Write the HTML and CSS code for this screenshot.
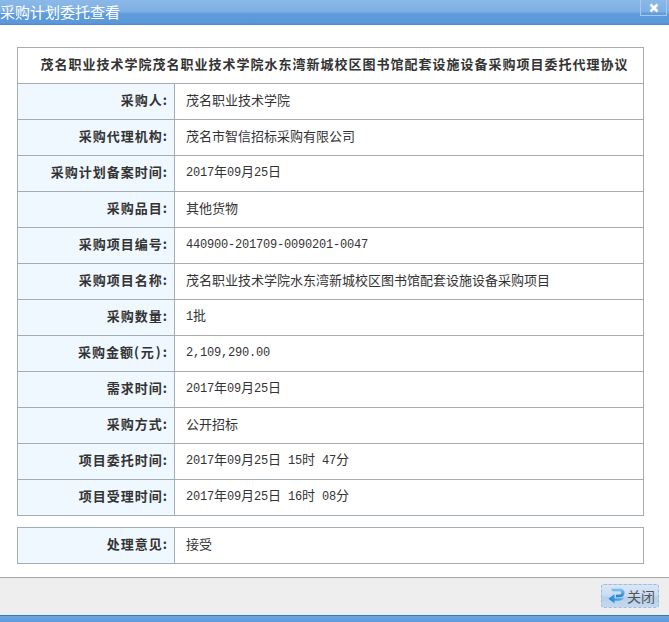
FILE: index.html
```html
<!DOCTYPE html>
<html lang="zh">
<head>
<meta charset="utf-8">
<title>采购计划委托查看</title>
<link rel="stylesheet" href="styles.css">
</head>
<body>
<div class="dialog">
  <header class="titlebar">
    <h1 class="title">采购计划委托查看</h1>
    <div class="close-box">
      <svg class="close-icon" width="10" height="10" viewBox="0 0 10 10"><path d="M1.5 1.5 8.500 8.500M8.500 1.500 1.500 8.500" stroke="#fff" stroke-width="2.600" fill="none"/></svg>
    </div>
  </header>
  <main class="content">
    <table class="grid">
      <colgroup><col class="col-label"><col></colgroup>
      <tr><th colspan="2" class="head">茂名职业技术学院茂名职业技术学院水东湾新城校区图书馆配套设施设备采购项目委托代理协议</th></tr>
      <tr><th>采购人:</th><td>茂名职业技术学院</td></tr>
      <tr><th>采购代理机构:</th><td>茂名市智信招标采购有限公司</td></tr>
      <tr><th>采购计划备案时间:</th><td><span class="num">2017</span>年<span class="num">09</span>月<span class="num">25</span>日</td></tr>
      <tr><th>采购品目:</th><td>其他货物</td></tr>
      <tr><th>采购项目编号:</th><td><span class="num">440900-201709-0090201-0047</span></td></tr>
      <tr><th>采购项目名称:</th><td>茂名职业技术学院水东湾新城校区图书馆配套设施设备采购项目</td></tr>
      <tr><th>采购数量:</th><td><span class="num">1</span>批</td></tr>
      <tr><th>采购金额<span class="paren">(元)</span>:</th><td><span class="num">2,109,290.00</span></td></tr>
      <tr><th>需求时间:</th><td><span class="num">2017</span>年<span class="num">09</span>月<span class="num">25</span>日</td></tr>
      <tr><th>采购方式:</th><td>公开招标</td></tr>
      <tr><th>项目委托时间:</th><td><span class="num">2017</span>年<span class="num">09</span>月<span class="num">25</span>日 <span class="num">15</span>时 <span class="num">47</span>分</td></tr>
      <tr><th>项目受理时间:</th><td><span class="num">2017</span>年<span class="num">09</span>月<span class="num">25</span>日 <span class="num">16</span>时 <span class="num">08</span>分</td></tr>
    </table>
    <table class="grid opinion">
      <colgroup><col class="col-label"><col></colgroup>
      <tr><th>处理意见:</th><td>接受</td></tr>
    </table>
  </main>
  <footer class="footer">
    <button class="close-btn" type="button">
      <svg class="btn-icon" width="17" height="16" viewBox="0 0 17 16">
        <defs>
          <linearGradient id="iconTop" x1="0" y1="0" x2="0" y2="1"><stop offset="0" stop-color="#8fc8f2"/><stop offset="1" stop-color="#1f7fd0"/></linearGradient>
          <linearGradient id="iconLow" x1="0" y1="0" x2="1" y2="0"><stop offset="0" stop-color="#1c86dc"/><stop offset="1" stop-color="#5fb2ea"/></linearGradient>
        </defs>
        <path d="M3 0.500H11.500C14.800 0.500 16.500 2.300 16.500 4.800C16.500 7.500 14.800 9.300 11.500 9.300H8V6.500H11C12.400 6.500 13.200 5.900 13.200 4.900C13.200 3.900 12.400 3.300 11 3.300H4.500Z" fill="url(#iconTop)"/>
        <path d="M6.500 6 0.500 10.700 6.500 15.500V12.800H10C13 12.800 15 11.700 16 9.500C14.500 10.300 12.800 10.400 10 10.400H6.500Z" fill="url(#iconLow)"/>
      </svg>
      <span>关闭</span>
    </button>
  </footer>
  <div class="bottom-bar"></div>
</div>
</body>
</html>
```
FILE: styles.css
```css
html, body {
  margin: 0;
  padding: 0;
  background: #fff;
  overflow: hidden;
}
body {
  font-family: "Noto Sans CJK SC", "Liberation Sans", sans-serif;
  font-size: 13px;
  color: #333;
}
.dialog {
  width: 669px;
  height: 622px;
  display: flex;
  flex-direction: column;
}
.titlebar {
  height: 25px;
  flex: none;
  display: flex;
  justify-content: space-between;
  background: linear-gradient(#8ab8e8 0%, #7fb0e4 45%, #5f9cdc 55%, #5b98da 92%, #4a86c8 100%);
}
.title {
  margin: 0;
  font-size: 15px;
  font-weight: 400;
  line-height: 24px;
  color: #fff;
}
.close-box {
  width: 25px;
  height: 15px;
  margin-right: 2px;
  border: 1px solid #a9c9ec;
  border-top: 0;
  display: flex;
  align-items: center;
  justify-content: center;
}
.content {
  flex: 1;
  padding: 22px 25px 0 17px;
  display: flex;
  flex-direction: column;
  gap: 11px;
}
.grid {
  width: 627px;
  border-collapse: collapse;
  table-layout: fixed;
}
.col-label {
  width: 157px;
}
.grid th, .grid td {
  height: 36px;
  padding: 0 0 4px;
  box-sizing: border-box;
  border: 1px solid #a5acb2;
  line-height: 16px;
}
.grid th {
  padding-right: 6px;
  text-align: right;
  font-weight: 700;
  letter-spacing: 1px;
  background: #f0f8ff;
  color: #333;
}
.grid td {
  padding-left: 11px;
  color: #333;
  word-spacing: 4px;
}
.grid th.head {
  padding: 0 0 3px 8px;
  text-align: center;
  font-size: 13px;
  letter-spacing: 1px;
  background: #fff;
}
.paren {
  letter-spacing: 2px;
}
.num {
  font-family: "Liberation Mono", monospace;
  font-size: 12px;
  letter-spacing: -0.2px;
}
.footer {
  height: 38px;
  flex: none;
  box-sizing: border-box;
  border-top: 1px solid #a3a6a8;
  background: #eeeeee;
  display: flex;
  justify-content: flex-end;
  align-items: flex-start;
  padding: 6px 10px 0 0;
}
.close-btn {
  width: 58px;
  height: 24px;
  padding: 0 0 0 6px;
  border: 1px dashed #9dbde0;
  border-radius: 3px;
  background: linear-gradient(#d9e6f6 0%, #c9dcf1 50%, #b8cfe9 55%, #c4d8ef 100%);
  display: flex;
  align-items: center;
  gap: 2px;
  font: 14px "Noto Sans CJK SC", sans-serif;
  color: #555;
  box-sizing: border-box;
}
.bottom-bar {
  height: 7px;
  flex: none;
  border-top: 1px solid #3f76b4;
  background: linear-gradient(#6ea4e0, #5f9ada);
  box-sizing: border-box;
}
```
